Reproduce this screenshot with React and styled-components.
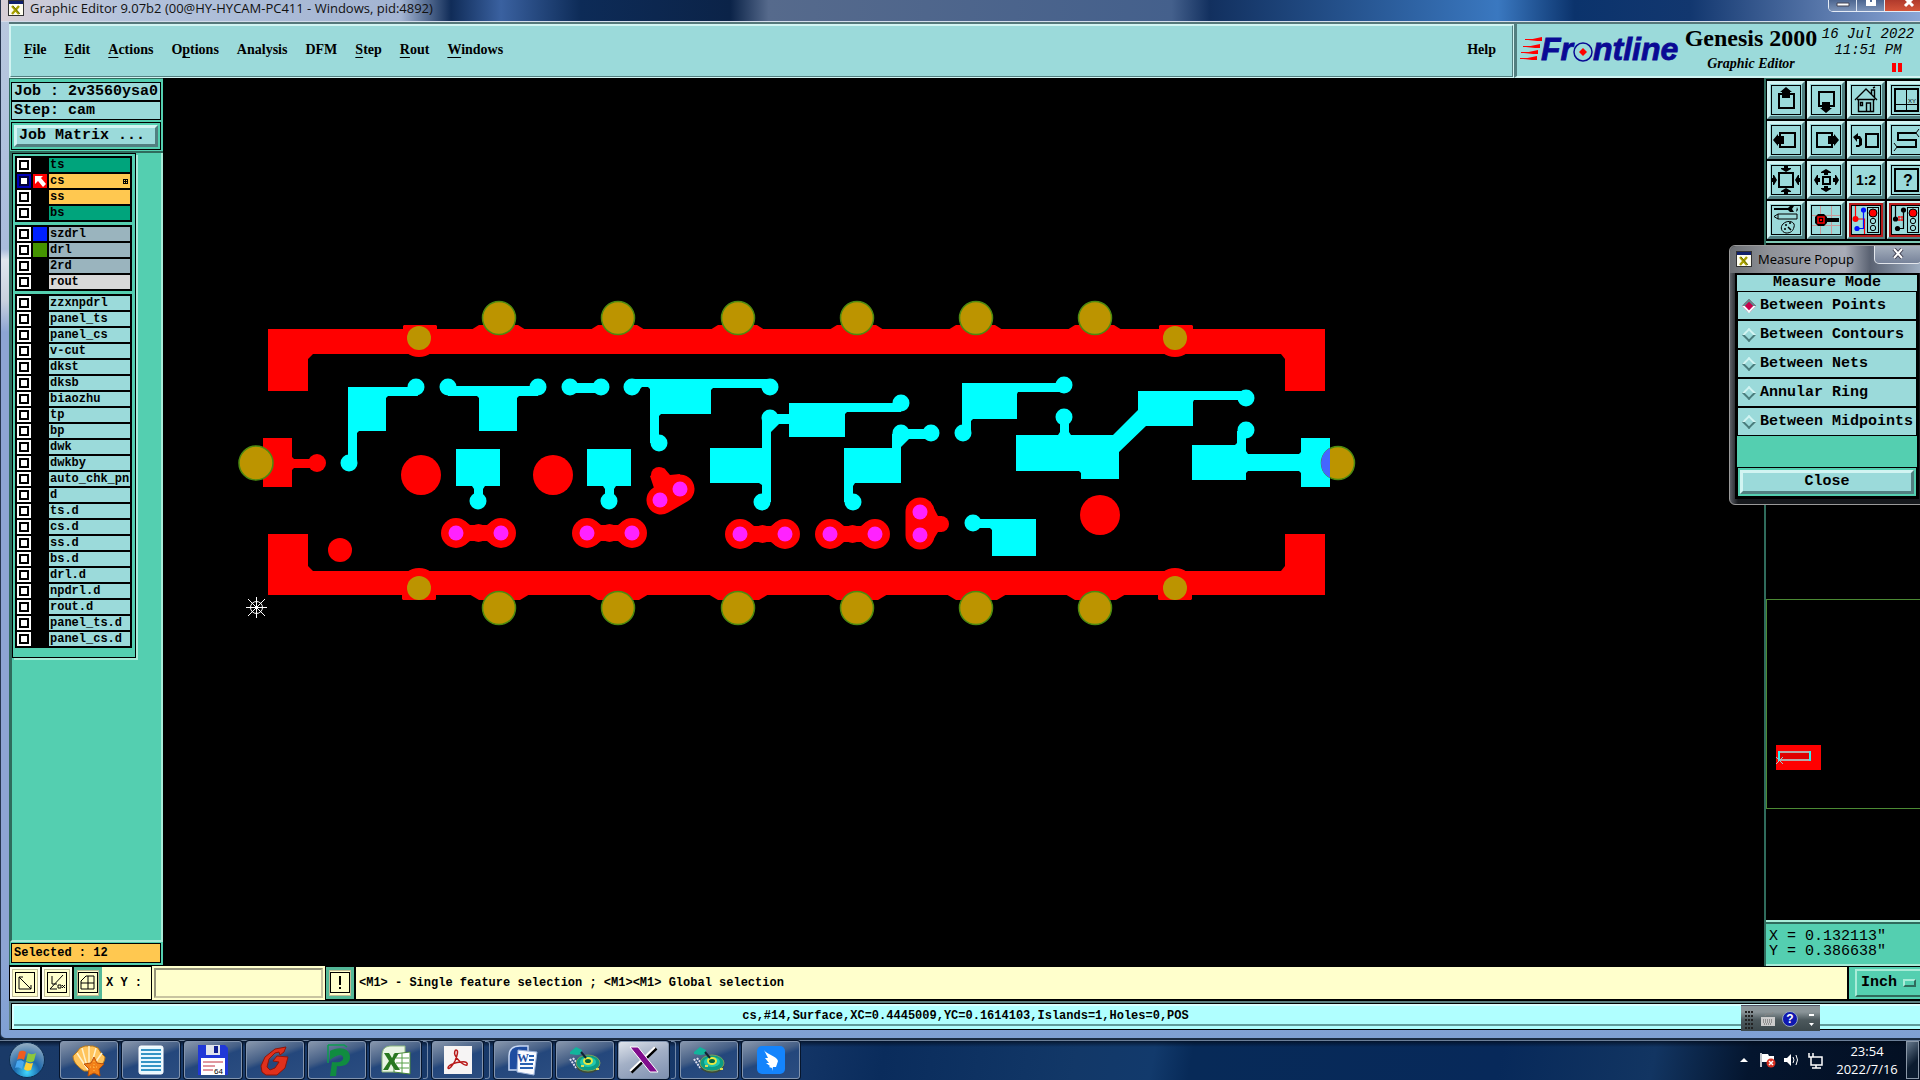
import React from "react";
import styled, { createGlobalStyle, css } from "styled-components";

const teal = "#9bdada";
const green = "#54cfb0";
const darkGreen = "#2f6b5c";
const cream = "#ffffcc";

const mono = '"Liberation Mono", monospace';
const serif = '"Liberation Serif", serif';
const sans = '"Open Sans", "Noto Sans", sans-serif';

const GlobalStyle = createGlobalStyle`
  * {
    box-sizing: border-box;
  }
  body {
    margin: 0;
    background: #000;
    overflow: hidden;
  }
  button, input, select {
    margin: 0;
    border-radius: 0;
    color: inherit;
  }
`;

const raised = css`
  border: 3px solid;
  border-color: #d2f4f2 #527f80 #527f80 #d2f4f2;
`;

const Page = styled.div`
  display: flex;
  flex-direction: column;
  height: 100vh;
  min-width: 1000px;
  overflow: hidden;
  position: relative;
  background: #061c3c;
  font-family: ${mono};
  font-weight: bold;
  color: #000;
`;

const Window = styled.div`
  flex: 1;
  min-height: 0;
  display: flex;
  flex-direction: column;
  padding: 0 0 8px 8px;
  border-left: 1px solid #26354e;
  border-bottom: 2px solid #1b2b42;
  border-radius: 0 0 0 6px;
  background: linear-gradient(#b9c9df 0%, #a9bcdc 24%, #e0e6ee 25%, #c8d0de 29%, #8da5d3 32%, #8da5d3 92%, #7fa0d4 100%);
`;

const TitleBar = styled.div`
  height: 22px;
  margin-left: -8px;
  display: flex;
  align-items: flex-start;
  justify-content: space-between;
  padding-left: 7px;
  border-bottom: 1px solid #d3dcea;
  background: linear-gradient(
    90deg,
    #d9cfd6 0,
    #b4c3dc 120px,
    #a3b4d2 400px,
    #102c58 450px,
    #3a61a0 500px,
    #0d2b57 580px,
    #0b2348 38%,
    #566a8c 40%,
    #44608c 61%,
    #12305f 63%,
    #3a78c0 78%,
    #0b336c 82%,
    #12376f 88%,
    #8ba6d6 100%
  );
`;

const Title = styled.div`
  display: flex;
  align-items: flex-start;
  gap: 6px;
  font: 13px/16px ${sans};
  color: #111;
  white-space: nowrap;
`;

const CaptionButtons = styled.div`
  display: flex;
  height: 12px;
  margin-right: -14px;
  border: 1px solid #e5ecf6;
  border-top: 0;
  border-radius: 0 0 5px 5px;
  overflow: hidden;
`;

const CaptionButton = styled.button`
  width: ${(props) => (props.$close ? 48 : 28)}px;
  padding: 0;
  border: 0;
  border-right: 1px solid #dfe7f3;
  background: ${(props) =>
    props.$close
      ? "linear-gradient(#b03a2c, #d4553a)"
      : "linear-gradient(#4d6690, #7c93b8)"};
  display: flex;
  justify-content: center;
  align-items: flex-start;
`;

const Header = styled.header`
  height: 56px;
  display: flex;
  flex-shrink: 0;
  background: ${teal};
  border-top: 2px solid #55777a;
`;

const MenuBar = styled.nav`
  flex: 1;
  display: flex;
  align-items: center;
  gap: 18px;
  padding: 0 16px 2px 13px;
  border: 2px solid;
  border-color: #d2f4f2 #527f80 #527f80 #d2f4f2;
  outline: 1px solid #d2f4f2;
  outline-offset: -1px;
`;

const MenuItem = styled.button`
  border: 0;
  padding: 0;
  background: none;
  font: bold 14px/20px ${serif};
  margin-left: ${(props) => (props.$last ? "auto" : "0")};

  u {
    text-underline-offset: 3px;
  }
`;

const Brand = styled.div`
  width: 406px;
  display: flex;
  overflow: hidden;
  padding-left: 2px;
  border-left: 3px solid #527f80;
  border-bottom: 2px solid #d2f4f2;
`;

const BrandTitle = styled.div`
  flex-shrink: 0;
  width: 134px;
  text-align: center;
  font-family: ${serif};
`;

const Product = styled.div`
  font-size: 24px;
  line-height: 29px;
  white-space: nowrap;
`;

const Module = styled.div`
  font-size: 14px;
  line-height: 22px;
  font-style: italic;
`;

const Clock = styled.div`
  flex-shrink: 0;
  width: 100px;
  padding-top: 2px;
  text-align: center;
  white-space: nowrap;
  font: italic 14px/16px ${mono};
`;

const Pause = styled.span`
  display: block;
  width: 10px;
  height: 9px;
  margin: 5px 16px 0 auto;
  border: solid #f00;
  border-width: 0 4px;
`;

const Middle = styled.main`
  flex: 1;
  min-height: 0;
  display: flex;
  background: #000;
`;

const SidePanel = styled.aside`
  width: 154px;
  flex-shrink: 0;
  display: flex;
  flex-direction: column;
  background: ${green};
  border: solid ${darkGreen};
  border-width: 1px 0 0 1px;
  margin-bottom: 2px;
`;

const JobBlock = styled.div`
  padding: 3px 2px 1px 1px;
  border-bottom: 2px solid ${darkGreen};
`;

const JobLine = styled.div`
  height: 19px;
  padding: 0 2px;
  overflow: hidden;
  white-space: nowrap;
  background: ${teal};
  border: 1px solid #000;
  font-size: 15px;
  line-height: 17px;
`;

const ButtonFrame = styled.div`
  margin-top: 2px;
  padding: 2px;
  border: 1px solid #000;
`;

const WideButton = styled.button`
  ${raised}
  display: block;
  width: 100%;
  height: ${(props) => (props.$tall ? 24 : 22)}px;
  padding: 0 2px;
  background: ${teal};
  text-align: ${(props) => props.$align || "center"};
  font: bold 15px/16px ${mono};
`;

const LayerArea = styled.div`
  flex: 1;
  min-height: 0;
  border: solid;
  border-width: 0 2px 2px 2px;
  border-color: #a8ecd8 #a8ecd8 #a8ecd8 ${darkGreen};
`;

const LayerList = styled.div`
  width: 124px;
  display: flex;
  flex-direction: column;
  gap: 3px;
  padding: 2px 2px 9px 2px;
  border: 1px solid #000;
  box-shadow: 2px 2px 0 #a8ecd8;
`;

const LayerGroup = styled.div`
  display: flex;
  flex-direction: column;
  gap: 2px;
  padding: 2px;
  width: 117px;
  background: #000;
`;

const LayerRow = styled.label`
  display: grid;
  grid-template-columns: 14px 14px 1fr;
  gap: 2px;
  height: 14px;
`;

const LayerCheck = styled.input`
  appearance: none;
  width: 14px;
  height: 14px;
  background: #fff;
  border: 2px solid ${(props) => (props.checked ? "#0000b8" : "#fff")};
  box-shadow: inset 0 0 0 ${(props) => (props.checked ? "2px #00003c" : "2px #000")};
`;

const Swatch = styled.span`
  background: ${(props) => props.$color || "#000"};
  line-height: 0;
`;

const LayerName = styled.span`
  display: flex;
  justify-content: space-between;
  align-items: center;
  padding: 0 2px 0 1px;
  overflow: hidden;
  white-space: nowrap;
  background: ${(props) => props.$color};
  font-size: 12px;
  line-height: 14px;
`;

const Selected = styled.div`
  margin: 1px 2px 2px 1px;
  height: 20px;
  padding: 0 2px;
  background: #ffc850;
  border: 1px solid #000;
  font-size: 12px;
  line-height: 18px;
`;

const Canvas = styled.div`
  flex: 1;
  min-width: 0;

  svg {
    display: block;
    width: 100%;
    height: 100%;
  }
`;

const ToolPanel = styled.aside`
  width: 156px;
  flex-shrink: 0;
  display: flex;
  flex-direction: column;
  overflow: hidden;
  border-left: 2px solid ${darkGreen};
  margin-bottom: 1px;
`;

const ToolGrid = styled.div`
  display: grid;
  grid-template-columns: repeat(4, 38px);
  gap: 2px;
  padding: 2px 1px;
  border-top: 1px solid ${darkGreen};
  border-bottom: 2px solid #7fc9b4;
`;

const ToolButton = styled.button`
  ${raised}
  border-width: ${(props) => (props.$active ? 2 : 3)}px;
  width: 38px;
  height: 38px;
  padding: 0;
  display: flex;
  align-items: center;
  justify-content: center;
  background: ${teal};
  box-shadow: ${(props) => (props.$active ? "inset 0 0 0 3px #b81c1c" : "none")};
`;

const Overview = styled.div`
  flex: 1;
  display: flex;
  align-items: flex-end;
  padding-bottom: 111px;
`;

const OverviewFrame = styled.div`
  width: 100%;
  height: 210px;
  border: 1px solid #4c8a34;
  border-right: 0;
`;

const Coordinates = styled.div`
  height: 46px;
  padding: 7px 3px 0;
  background: ${green};
  border-top: 2px solid #a8ecd8;
  border-bottom: 2px solid #a8ecd8;
  box-shadow: inset 0 2px 0 ${darkGreen};
  font-size: 15px;
  line-height: 15px;
  font-weight: normal;
  white-space: pre;
`;

const CommandBar = styled.form`
  height: 34px;
  flex-shrink: 0;
  display: flex;
  gap: 2px;
  background: #000;
  padding: 0 0 2px 1px;
  font-size: 12px;
`;

const CommandButton = styled.button`
  width: ${(props) => (props.$framed ? 28 : 30)}px;
  padding: 0;
  display: flex;
  align-items: center;
  justify-content: center;
  background: ${cream};
  border: ${(props) => (props.$framed ? "3px solid #54b898" : "2px solid #fffff0")};
  box-shadow: inset 0 0 0 1px #c0bc98;
`;

const CommandLabel = styled.label`
  flex-shrink: 0;
  width: 49px;
  padding-left: 4px;
  margin-left: -2px;
  background: ${cream};
  line-height: 33px;
  white-space: nowrap;
`;

const CommandInput = styled.input`
  width: 171px;
  padding: 0 4px;
  background: ${cream};
  border: 3px solid;
  border-color: #96947a #c8c4a0 #c8c4a0 #96947a;
  outline: 2px solid ${cream};
  outline-offset: -1px;
  font: bold 12px ${mono};
`;

const Message = styled.output`
  flex: 1;
  min-width: 0;
  overflow: hidden;
  padding-left: 3px;
  background: ${cream};
  line-height: 33px;
  white-space: nowrap;
`;

const UnitBox = styled.div`
  width: 71px;
  flex-shrink: 0;
  overflow: hidden;
  padding: 2px 0 2px 6px;
  background: ${green};
`;

const UnitButton = styled.div`
  display: flex;
  align-items: center;
  width: 76px;
  height: 28px;
  border: 2px solid;
  border-color: #a8ecd8 ${darkGreen} ${darkGreen} #a8ecd8;
`;

const UnitSelect = styled.select`
  appearance: none;
  width: 46px;
  padding: 0 0 0 4px;
  border: 0;
  background: none;
  font: bold 15px/20px ${mono};
`;

const UnitMark = styled.span`
  width: 13px;
  height: 8px;
  border: 2px solid;
  border-color: #a8ecd8 ${darkGreen} ${darkGreen} #a8ecd8;
`;

const StatusBar = styled.footer`
  height: 29px;
  flex-shrink: 0;
  border: 2px solid #5c7f80;
  border-bottom: 1px solid #000;
  border-right: 0;
  background: #b0ffff;
  box-shadow: inset 1px 1px 0 #000, inset 3px 3px 0 #d8ffff, inset 0 -3px 0 #b0ffff, inset 0 -5px 0 #5f9c9c;
  text-align: center;
  font-size: 12px;
  line-height: 27px;
`;

const Popup = styled.section`
  position: absolute;
  top: 245px;
  right: -6px;
  width: 197px;
  padding: 0 6px 5px 5px;
  border: 1px solid #9a9a9a;
  border-radius: 6px;
  background: linear-gradient(90deg, #5c5f66, #15181c 8px, #15181c);
`;

const PopupTitle = styled.header`
  display: flex;
  align-items: center;
  gap: 6px;
  height: 27px;
  margin: 0 -6px 0 -5px;
  padding: 0 0 2px 6px;
  border-radius: 6px 6px 0 0;
  background: linear-gradient(90deg, #6c6f74, #8f9298 40px, #a9adb8 115px, #5a6272 140px, #a4b4c8);
  font: 13px/18px ${sans};
`;

const PopupClose = styled.button`
  width: 48px;
  height: 18px;
  margin-left: auto;
  margin-right: 3px;
  align-self: flex-start;
  padding: 0;
  border: 1px solid #e2e6ec;
  border-top: 0;
  border-radius: 0 0 5px 5px;
  background: linear-gradient(#a5afbd, #77839a);
`;

const PopupBody = styled.fieldset`
  margin: 0;
  padding: 1px;
  min-width: 0;
  border: 1px solid #000;
  background: #000;
`;

const PopupHeading = styled.legend`
  float: left;
  width: 100%;
  padding: 0;
  height: 16px;
  background: ${teal};
  text-align: center;
  font-size: 15px;
  line-height: 16px;
`;

const Choice = styled.label`
  clear: both;
  display: flex;
  align-items: center;
  gap: 6px;
  height: 29px;
  padding-left: 6px;
  border: 1px solid #000;
  background: ${teal};
  white-space: nowrap;
  font-size: 15px;
  line-height: 20px;
`;

const Diamond = styled.input`
  appearance: none;
  flex-shrink: 0;
  width: 10px;
  height: 10px;
  transform: rotate(45deg);
  border: 2px solid;
  border-color: ${(props) =>
    props.checked
      ? "#5c8c8c #f2ffff #f2ffff #5c8c8c"
      : "#d2f4f2 #4a7c7c #4a7c7c #d2f4f2"};
  background: ${(props) => (props.checked ? "#c8004c" : teal)};
`;

const PopupFooter = styled.div`
  padding-top: 31px;
  background: ${green};
`;

const PopupButtonFrame = styled.div`
  padding: 2px;
  border: 1px solid #000;
`;

const LanguageBar = styled.div`
  position: absolute;
  right: 100px;
  bottom: 49px;
  width: 79px;
  height: 26px;
  display: flex;
  align-items: center;
  border-top: 1px solid #556;
  background: linear-gradient(#8a9498, #8a9498 6px, #4c585c 14px, #3c484c);
`;

const TaskBar = styled.footer`
  height: 40px;
  flex-shrink: 0;
  display: flex;
  align-items: flex-start;
  gap: 4px;
  padding-right: 1px;
  border-top: 1px solid #6c7f98;
  background: linear-gradient(rgba(0, 10, 25, 0.7), rgba(0, 10, 25, 0) 6px),
    linear-gradient(100deg, #1a3a68, #16386a 40%, #0a2c5c 46%, #123868 56%, #123a6c 60%, #072a58 62%, #07295a 78%, #123562 86%, #04152e 91%, #030f22);
`;

const StartButton = styled.button`
  width: 56px;
  height: 38px;
  padding: 0 0 0 8px;
  border: 0;
  background: none;
  line-height: 0;
  text-align: left;
`;

const TaskStack = styled.div`
  width: 58px;
  height: 38px;
  display: flex;
  gap: 2px;

  i {
    width: 5px;
    border: solid #7288a8;
    border-width: 1px 1px 1px 0;
    border-radius: 0 3px 3px 0;
  }
`;

const TaskButton = styled.button`
  flex: 1;
  padding: 0;
  display: flex;
  align-items: center;
  justify-content: center;
  border: 1px solid #8294ae;
  border-radius: 3px;
  box-shadow: 0 0 0 1px #06152c;
  background: ${(props) =>
    props.$active
      ? "linear-gradient(160deg, #dfe4ec, #a3b0c6 45%, #7e90b0)"
      : "linear-gradient(160deg, #8796ac, #455f86 40%, #24477c 50%, #2b4d80)"};
`;

const Tray = styled.div`
  display: flex;
  align-items: center;
  margin-left: auto;
`;

const TrayTime = styled.time`
  width: 78px;
  text-align: center;
  color: #fff;
  font: 13px/18px ${sans};
`;

const ShowDesktop = styled.button`
  width: 13px;
  height: 38px;
  padding: 0;
  border: 1px solid #8b98a8;
  background: linear-gradient(135deg, #66788c, #0c1c30 60%);
`;

const menus = [
  ["", "F", "ile"],
  ["", "E", "dit"],
  ["", "A", "ctions"],
  ["O", "p", "tions"],
  ["Analysis", "", ""],
  ["DFM", "", ""],
  ["", "S", "tep"],
  ["", "R", "out"],
  ["", "W", "indows"],
];

const layerGroups = [
  [
    { name: "ts", color: "#00a47c" },
    { name: "cs", color: "#ffc850", swatch: "#f00", work: true },
    { name: "ss", color: "#ffc850" },
    { name: "bs", color: "#00a47c" },
  ],
  [
    { name: "szdrl", color: "#9ab4be", swatch: "#0020ff" },
    { name: "drl", color: "#9ab4be", swatch: "#449400" },
    { name: "2rd", color: "#9ab4be" },
    { name: "rout", color: "#d8d8d8" },
  ],
  [
    "zzxnpdrl", "panel_ts", "panel_cs", "v-cut", "dkst", "dksb", "biaozhu",
    "tp", "bp", "dwk", "dwkby", "auto_chk_pnl", "d", "ts.d", "cs.d", "ss.d",
    "bs.d", "drl.d", "npdrl.d", "rout.d", "panel_ts.d", "panel_cs.d",
  ].map((name) => ({ name, color: teal })),
];

const measureModes = [
  "Between Points",
  "Between Contours",
  "Between Nets",
  "Annular Ring",
  "Between Midpoints",
];

const XIcon = () => (
  <svg width="16" height="16" viewBox="0 0 16 16">
    <rect x="0.5" y="0.5" width="15" height="15" fill="#fffef0" stroke="#333" />
    <rect x="1" y="1" width="14" height="3" fill="#10206c" />
    <path d="M4 6l7 8M11 6l-7 8" stroke="#a8a000" strokeWidth="2.4" />
    <path d="M5 6l7 8" stroke="#4c5c00" strokeWidth="0.8" />
  </svg>
);

const LogoArt = styled.svg`
  flex-shrink: 0;
  margin-right: 1px;
`;

const Logo = () => (
  <LogoArt width="164" height="52" viewBox="0 0 164 52">
    <g stroke="#f00" strokeWidth="1">
      <path d="M6 15.5h14M4 22.5h14M2 28.5h14M1 34.5h15" />
    </g>
    <g fill="#f00">
      <path d="M9 16l14-3v4h-5zM7 23l14-3v4h-5zM5 29l14-3v4h-5zM4 35l14-3v4h-5z" />
    </g>
    <g
      fontFamily="Liberation Sans, sans-serif"
      fontStyle="italic"
      fontWeight="bold"
      fontSize="32"
      fill="#0a0a94"
      stroke="#0a0a94"
      strokeWidth="0.8"
    >
      <text x="22" y="36">Fr</text>
      <text x="74" y="36">ntline</text>
    </g>
    <circle cx="64" cy="28" r="9" fill={teal} stroke="#0a0a94" strokeWidth="1.500" />
    <path d="M64 24l4 4-4 4-4-4z" fill="#f00" />
  </LogoArt>
);

const wedge = "M0-3l5 3v1h-3v2h-4V1h-3V0z";

const tools = [
  {
    label: "Pan up",
    art: (
      <>
        <rect x="8" y="9" width="15" height="14" fill="none" stroke="#000" strokeWidth="2" />
        <path d="M15 2l6 5h-2v6h-8V7H9z" />
      </>
    ),
  },
  {
    label: "Pan down",
    art: (
      <>
        <rect x="8" y="7" width="15" height="14" fill="none" stroke="#000" strokeWidth="2" />
        <path d="M15 28l6-5h-2v-6h-8v6H9z" />
      </>
    ),
  },
  {
    label: "Home",
    art: (
      <path
        d="M4 15L15 4l11 11M6 14.500h18M7.500 15v11.500h15V15M15.500 26v-8h4v8M9.500 17.500h2v3h-2zM20.500 9V5h3v7M22 3l2-1"
        fill="none"
        stroke="#000"
        strokeWidth="1.400"
      />
    ),
  },
  {
    label: "Zoom XY",
    art: (
      <>
        <rect x="4" y="4" width="23" height="22" fill="none" stroke="#000" strokeWidth="2" />
        <path d="M15.500 4v22M4 19.500h23" stroke="#000" />
        <text x="17" y="18" fontSize="6" fontFamily="Liberation Sans, sans-serif">XY</text>
      </>
    ),
  },
  {
    label: "Pan left",
    art: (
      <>
        <rect x="9" y="8" width="15" height="14" fill="none" stroke="#000" strokeWidth="2" />
        <path d="M2 15l5-6v2h6v8H7v2z" />
      </>
    ),
  },
  {
    label: "Pan right",
    art: (
      <>
        <rect x="6" y="8" width="15" height="14" fill="none" stroke="#000" strokeWidth="2" />
        <path d="M28 15l-5-6v2h-6v8h6v2z" />
      </>
    ),
  },
  {
    label: "Previous view",
    art: (
      <>
        <rect x="15" y="9" width="12" height="13" fill="none" stroke="#000" strokeWidth="2" />
        <path d="M2 12l5-4v3h2l2 3v6l-3 2H5v-2h3v-6H6v3z" />
      </>
    ),
  },
  {
    label: "Path",
    art: (
      <>
        <path d="M6 22h19v-7H7V8h18" fill="none" stroke="#000" strokeWidth="2" />
        <path d="M3 18l3 4-3 4M28 4l-3 4 3 4" fill="none" stroke="#000" />
      </>
    ),
  },
  {
    label: "Zoom in",
    art: (
      <>
        <rect x="8" y="8" width="14" height="14" fill="none" stroke="#000" strokeWidth="2" />
        <path d={wedge} transform="translate(15 4) rotate(180)" />
        <path d={wedge} transform="translate(15 26)" />
        <path d={wedge} transform="translate(3 15) rotate(90)" />
        <path d={wedge} transform="translate(27 15) rotate(-90)" />
      </>
    ),
  },
  {
    label: "Zoom out",
    art: (
      <>
        <rect x="12" y="12" width="7" height="7" fill="none" stroke="#000" strokeWidth="2" />
        <path d={wedge} transform="translate(15 7)" />
        <path d={wedge} transform="translate(15 24) rotate(180)" />
        <path d={wedge} transform="translate(6 15) rotate(-90)" />
        <path d={wedge} transform="translate(25 15) rotate(90)" />
      </>
    ),
  },
  {
    label: "Scale",
    art: (
      <text x="15" y="20" textAnchor="middle" fontSize="14" fontWeight="bold" fontFamily="Liberation Sans, sans-serif">
        1:2
      </text>
    ),
  },
  {
    label: "Query",
    art: (
      <>
        <rect x="4" y="4" width="23" height="22" fill="none" stroke="#000" strokeWidth="2" />
        <text x="17" y="21" textAnchor="middle" fontSize="16" fontWeight="bold" fontFamily="Liberation Sans, sans-serif">
          ?
        </text>
      </>
    ),
  },
  {
    label: "Setup",
    art: (
      <>
        <path d="M3 3h14l2-2h4l-2 3 2 3h-4l-2-2H3zM26 2l1 3-2 2z" />
        <path d="M3 11.500l4-2.500h19v5H7zM7 9v5" fill="none" stroke="#000" />
        <path d="M12 19c5-5 13-2 11 3-1 4-3 6-8 6-5-1-6-6-3-9z" fill="none" stroke="#000" />
        <path d="M14 20h2M18 18h2M13 24h2M17 22l3 3" stroke="#000" strokeWidth="1.500" />
      </>
    ),
  },
  {
    label: "Snap",
    art: (
      <>
        <path d="M1 10.500h28M1 20.500h28M9.500 1v28M20.500 1v28" stroke="#c99a9a" />
        <path d="M15 13h13v4H15z" />
        <path d="M7 9h6l3 3v6l-3 3H7l-3-3v-6z" />
        <rect x="7" y="12" width="6" height="6" fill="none" stroke="#f00" strokeWidth="1.500" />
        <rect x="9" y="14" width="2" height="2" fill="#f00" />
      </>
    ),
  },
  {
    label: "Net check",
    active: true,
    art: (
      <>
        <path d="M4.500 1v13h9v15" fill="none" stroke="#f00" strokeWidth="1.200" />
        <path d="M12.500 4v19.500H6" fill="none" stroke="#0010ff" strokeWidth="1.200" />
        <circle cx="4.500" cy="14" r="3" fill="#f00" />
        <circle cx="12.500" cy="5" r="2.600" fill="#0010ff" />
        <circle cx="6" cy="23.500" r="2.600" fill="#0010ff" />
        <TrafficLight />
      </>
    ),
  },
  {
    label: "Spacing check",
    active: true,
    art: (
      <>
        <path d="M4.500 1v13M12.500 5v18.500H6" fill="none" stroke="#000" strokeWidth="1.200" />
        <path d="M7 12h5M7 15h5M8 11v5M11 11v5" stroke="#f00" />
        <circle cx="4.500" cy="14" r="2.600" />
        <circle cx="12.500" cy="5" r="2.600" />
        <circle cx="6.500" cy="23.500" r="2.600" />
        <TrafficLight />
      </>
    ),
  },
];

function TrafficLight() {
  return (
    <g stroke="#000">
      <rect x="16.500" y="2.500" width="11" height="25" fill="none" />
      <circle cx="22" cy="8" r="4" fill="#f00" />
      <circle cx="22" cy="16" r="2.700" fill={teal} />
      <circle cx="22" cy="23" r="2.700" fill={teal} />
    </g>
  );
}

const bigPads = [498, 617, 737, 856, 975, 1094];
const smallPads = [419, 1175];
const dumbbells = [
  [456, 501, 533],
  [587, 632, 533],
  [740, 785, 534],
  [830, 875, 534],
];
const cyanDots = [
  [416, 387], [349, 463], [448, 387], [538, 387], [570, 387], [601, 387],
  [632, 387], [770, 387], [659, 443], [770, 418], [901, 403], [762, 502],
  [853, 502], [901, 433], [931, 433], [1064, 385], [963, 433], [1064, 417],
  [1246, 398], [1246, 430], [973, 523], [478, 501], [609, 501],
];

const Board = () => (
  <svg viewBox="163 78 1601 889" preserveAspectRatio="xMinYMin meet" role="img" aria-label="cs layer">
    <g fill="#f00">
      <path d="M268 329h1057v62h-40v-32l-4-5H313l-5 5v32h-40z" />
      <path d="M268 534h40v32l5 5h968l4-5v-32h40v61H268z" />
      {smallPads.map((x) => (
        <g key={x}>
          <path d={`M${x - 16} 332v-6l1-1h32l1 1v6z`} />
          <path d={`M${x - 12} 353q5 4 12 4t12-4zM${x - 12} 572q5-4 12-4t12 4z`} />
          <path d={`M${x - 17} 590v9l1 1h32l1-1v-9z`} />
        </g>
      ))}
      {bigPads.map((x) => (
        <g key={x}>
          <path d={`M${x - 27} 330l8-5h39l8 5z`} />
          <path d={`M${x - 29} 594l10 6h41l10-6z`} />
        </g>
      ))}
      <path d="M263 438h29v49h-29zM292 457l2 2h20v9h-20l-2 2z" />
      <circle cx="317" cy="463" r="9" />
      <circle cx="421" cy="475" r="20" />
      <circle cx="553" cy="475" r="20" />
      <circle cx="1100" cy="515" r="20" />
      <circle cx="340" cy="550" r="12" />
      {dumbbells.map(([a, b, y]) => (
        <g key={a}>
          <circle cx={a} cy={y} r="15" />
          <circle cx={b} cy={y} r="15" />
          <path d={`M${a + 9} ${y - 12}l5 4h17l5-4v24l-5-4h-17l-5 4z`} />
          <circle cx={(a + b) / 2} cy={y} r="9" />
        </g>
      ))}
      <path d="M680 489L661 500" stroke="#f00" strokeWidth="29" strokeLinecap="round" />
      <path d="M650 476l5 15-5 9h25l5-26-10 1-6-7z" />
      <circle cx="659" cy="475" r="8" />
      <path d="M920 512v23" stroke="#f00" strokeWidth="29" strokeLinecap="round" />
      <path d="M930 501l8 15h4v16h-4l-8 13z" />
      <circle cx="941" cy="524" r="8" />
    </g>
    <g fill="#f2f">
      {dumbbells.map(([a, b, y]) => (
        <g key={a}>
          <circle cx={a} cy={y} r="7.500" />
          <circle cx={b} cy={y} r="7.500" />
        </g>
      ))}
      <circle cx="680" cy="489" r="7.500" />
      <circle cx="660" cy="500" r="7.500" />
      <circle cx="920" cy="512" r="7.500" />
      <circle cx="920" cy="535" r="7.500" />
    </g>
    <g fill="#0ff">
      {cyanDots.map(([x, y]) => (
        <circle key={`${x}-${y}`} cx={x} cy={y} r="8.500" />
      ))}
      <path d="M348 387h60l6-6 4 15h-30l-2 2v33h-27l-2 2v30h-9z" />
      <path d="M448 380l8 6h74l8-6v16h-19l-2 2v33h-38v-33l-2-2h-29z" />
      <path d="M570 383h31v10h-31z" />
      <path d="M632 379h138v9l-7 1-2-1h-48l-2 2v24h-50l-2 2v20l7 7h-16v-54l-2-2h-6l-8 8z" />
      <path d="M762 419h9v-5h18v-11h104l8-7v16h-54l-2 2v23h-56v-13h-10l-8 8v70h-9v-17l-3-2h-49v-35h52z" />
      <path d="M844 448h48v-14l9-5h30v10h-22l-8 8v36h-46l-2 3v16h-9z" />
      <path d="M962 383h94l8-6v15h-46l-1 2v25h-44l-2 2v13h-9z" />
      <path d="M1060 418h9v14l2 3h42l25-25v-19h108v9h-52l-1 2v24h-47l-27 26v27h-38v-6l-2-2h-63v-36h42l2-3z" />
      <path d="M1237 431h9v20l2 3h51l2-2v-14h29v49h-29v-14l-2-2h-51l-2 2v7h-54v-35h43l2-2z" />
      <path d="M973 519h63v37h-44v-26l-2-2h-17z" />
      <path d="M456 449h44v37h-15l-2 3v11h-9v-11l-2-3h-16z" />
      <path d="M587 449h44v37h-15l-2 3v11h-9v-11l-2-3h-16z" />
    </g>
    <g fill="#bc9400" stroke="#4c8a10" strokeWidth="1.500">
      {bigPads.map((x) => (
        <g key={x}>
          <circle cx={x + 1} cy="318" r="16.500" />
          <circle cx={x + 1} cy="608" r="16.500" />
        </g>
      ))}
      <circle cx="256" cy="463" r="17" />
      <circle cx="1338" cy="463" r="16.500" />
    </g>
    <path d="M1330 448q-9 5-9 15t9 15z" fill="#46f" />
    <g fill="#bc9400">
      {smallPads.map((x) => (
        <g key={x}>
          <circle cx={x} cy="338" r="12" />
          <circle cx={x} cy="588" r="12" />
        </g>
      ))}
    </g>
    <g stroke="#fff" fill="none">
      <circle cx="256.500" cy="607.500" r="6" />
      <path d="M246 607.500h21M256.500 597v21M248 599l17 17M265 599l-17 17" />
    </g>
  </svg>
);

const OverviewMap = () => (
  <svg width="60" height="200" viewBox="0 0 60 200">
    <path d="M9 145h45v25H9z" fill="#f00" />
    <path d="M12 152h31v8H12z" fill="#e00000" stroke="#b8a8a8" strokeWidth="2" />
    <path d="M12 151v10M43 151v10" stroke="#3ee" strokeWidth="2" />
    <path d="M9 157l7 7M16 157l-7 7" stroke="#9cc" />
  </svg>
);

const Disc = () => (
  <svg width="34" height="32" viewBox="0 0 34 32">
    <path d="M2 15l7 10M5 14l7 9" stroke="#dde" strokeWidth="2" strokeDasharray="2 1" />
    <ellipse cx="20" cy="21" rx="12" ry="8" fill="#3c4c38" />
    <ellipse cx="20" cy="19" rx="12" ry="8" fill="#0c9c84" stroke="#7c9c58" />
    <ellipse cx="20" cy="18" rx="8" ry="5" fill="#22c8b0" />
    <ellipse cx="20" cy="17" rx="4" ry="3" fill="#064" stroke="#e8e840" strokeWidth="2" />
    <path d="M2 8l6-5 6 3v4l-5 1-7-1z" fill="#12b49c" />
    <path d="M13 8l5 6" stroke="#123" strokeWidth="2" />
    <path d="M28 24h3v2h-3zM13 21h3v2h-3z" fill="#dd5" />
  </svg>
);

const taskIcons = {
  Shell: (
    <svg width="34" height="34" viewBox="0 0 34 34">
      <path d="M12 28C6 24 1 19 1 13l4-4 3-4 5-2h8l5 2 3 5 4 4c0 6-5 10-11 14z" fill="#ffc45c" stroke="#b87818" />
      <path d="M16 27L5 10M16 27L10 5M17 27V3M18 27l6-22M18 27L30 10" stroke="#fff0c8" strokeWidth="1.500" />
      <path d="M22 14l3 6 7 1-5 5 1 7-6-3-6 3 1-7-5-5 7-1z" fill="#f28018" stroke="#b85008" />
      <path d="M22 18v10M18 24h9" stroke="#ffc050" strokeDasharray="1 2" />
    </svg>
  ),
  Notes: (
    <svg width="26" height="30" viewBox="0 0 26 30">
      <rect x="1" y="1" width="24" height="28" rx="2" fill="#e8f8ff" stroke="#fff" />
      <path d="M3 5h20M3 9h20M3 13h20M3 17h20M3 21h20M3 25h20" stroke="#3494c4" strokeWidth="2" />
    </svg>
  ),
  Save: (
    <svg width="32" height="32" viewBox="0 0 32 32">
      <path d="M1 1h27l3 3v27H1z" fill="#2038d8" />
      <path d="M9 1h14v10H9z" fill="#e0e4ec" />
      <path d="M17 2h4v7h-4z" fill="#102090" />
      <path d="M4 14h24v17H4z" fill="#fff" />
      <path d="M6 18h20M6 22h12M6 26h10" stroke="#c03040" />
      <text x="17" y="30" fontSize="8" fontFamily="Liberation Sans, sans-serif">64</text>
    </svg>
  ),
  Editor: (
    <svg width="32" height="32" viewBox="0 0 32 32">
      <path d="M27 3L16 5 6 13 2 22l1 6 4 3h11l8-7 3-11-11-1-4 5 6 1-4 6-5 2-3-3 2-8 6-6 4-1 1 3 4-3z" fill="#e0301c" stroke="#901408" />
    </svg>
  ),
  Pads: (
    <svg width="34" height="34" viewBox="0 0 34 34">
      <path d="M8 2h16l3 2M8 2v18" fill="none" stroke="#0c9c50" strokeWidth="1.500" />
      <path d="M10 8c9-5 20-3 20 6 0 7-6 10-13 9l-1 10h-6l2-14c8 1 12-1 11-5-2-4-8-1-13 3z" fill="#108c40" />
    </svg>
  ),
  Excel: (
    <svg width="32" height="32" viewBox="0 0 32 32">
      <path d="M2 28V12C2 4 6 2 12 2h13v26z" fill="#e8f4e4" stroke="#8cb880" />
      <path d="M14 10l16-2v22l-16-2z" fill="#fff" stroke="#488838" />
      <path d="M16 14h13M16 19h13M16 24h13M22 9v20" stroke="#58a048" />
      <path d="M4 9h5l3 5 3-5h4l-5 8 6 9h-5l-4-6-3 6H3l6-9z" fill="#287820" />
    </svg>
  ),
  Reader: (
    <svg width="28" height="28" viewBox="0 0 28 28">
      <path d="M0 0h28v28H0z" fill="#f6f4f4" />
      <path d="M12 4c3 0 1 6-1 11-2 4-6 9-7 7 0-3 8-6 13-6 5-1 7 1 6 3-3 1-10-5-12-10-1-2 0-5 1-5z" fill="none" stroke="#b81818" strokeWidth="1.500" />
    </svg>
  ),
  Word: (
    <svg width="32" height="32" viewBox="0 0 32 32">
      <path d="M2 26V12C2 5 6 2 13 2h8v24z" fill="#1e4ca0" stroke="#c8d8f4" strokeWidth="1.500" />
      <path d="M11 6l19 2-3 23-17-3z" fill="#f8faff" stroke="#98b0d8" />
      <path d="M22 12h5M22 16h5M13 20h13M13 24h13" stroke="#2860b0" strokeWidth="2" />
      <text x="10" y="18" fontSize="12" fontWeight="bold" fontFamily="Liberation Serif, serif" fill="#1e4ca0">W</text>
    </svg>
  ),
  Measure: <Disc />,
  Genesis: (
    <svg width="34" height="30" viewBox="0 0 34 30">
      <path d="M29 3L4 27" stroke="#000" strokeWidth="4" />
      <path d="M28 2L3 26" stroke="#fff" strokeWidth="2" />
      <path d="M3 2h8l20 25h-8z" fill="#800c8c" stroke="#fff" />
    </svg>
  ),
  Tool: <Disc />,
  Wing: (
    <svg width="28" height="28" viewBox="0 0 28 28">
      <rect width="28" height="28" rx="5" fill="#1484fc" />
      <path d="M7 4c2 4 13 6 14 11l-2 6h-3l-1 4v-3l-3-1 1-1-4-3h3l-4-5h3z" fill="#fff" />
    </svg>
  ),
};

const tasks = [
  ["Shell"], ["Notes"], ["Save"], ["Editor"], ["Pads"], ["Excel", true],
  ["Reader", true], ["Word"], ["Measure"], ["Genesis", true], ["Tool"], ["Wing"],
];

const StartOrb = () => (
  <svg width="38" height="38" viewBox="0 0 38 38">
    <defs>
      <radialGradient id="orb" cx="50%" cy="85%" r="80%">
        <stop offset="0" stopColor="#40d8ff" />
        <stop offset="0.450" stopColor="#1c68ac" />
        <stop offset="1" stopColor="#8ca8c0" />
      </radialGradient>
    </defs>
    <circle cx="19" cy="19" r="17.500" fill="url(#orb)" stroke="#0c2c50" />
    <path d="M11 11c3-2 5-1 7 0l-2 8c-2-1-4-2-7 0z" fill="#f05c20" />
    <path d="M20 12c2 1 4 2 8 0l-2 8c-3 2-6 1-8 0z" fill="#8cc83c" />
    <path d="M9 20c3-1 5-1 7 1l-2 7c-2-1-4-2-7-1z" fill="#48a8f0" />
    <path d="M18 21c2 1 4 2 7 1l-2 7c-3 1-5 1-7-1z" fill="#ffd034" />
  </svg>
);

const ToolIcon = ({ children }) => (
  <svg width="32" height="32" viewBox="-1 -1 32 32">
    <rect x="0.500" y="0.500" width="29" height="29" fill="none" stroke="#000" />
    {children}
  </svg>
);

const CommandIcon = ({ children }) => (
  <svg width="20" height="22" viewBox="0 0 20 22" fill="none" stroke="#000">
    <rect x="0.500" y="0.500" width="19" height="20" />
    {children}
  </svg>
);

const App = () => {
  const [workLayers, setWorkLayers] = React.useState(["cs"]);
  const [mode, setMode] = React.useState("Between Points");

  const toggleLayer = (name) => {
    if (workLayers.includes(name)) {
      setWorkLayers(workLayers.filter((layer) => layer !== name));
    } else {
      setWorkLayers([...workLayers, name]);
    }
  };

  return (
    <Page>
      <GlobalStyle />
      <Window>
        <TitleBar>
          <Title>
            <XIcon />
            Graphic Editor 9.07b2 (00@HY-HYCAM-PC411 - Windows, pid:4892)
          </Title>
          <CaptionButtons>
            <CaptionButton aria-label="Minimize">
              <svg width="14" height="8">
                <path d="M1 3h12v3H1z" fill="#fff" stroke="#445" />
              </svg>
            </CaptionButton>
            <CaptionButton aria-label="Restore">
              <svg width="12" height="8">
                <path d="M2 0v5h8V0M4 0v3h4V0" fill="none" stroke="#fff" strokeWidth="2" />
              </svg>
            </CaptionButton>
            <CaptionButton $close aria-label="Close window">
              <svg width="14" height="8">
                <path d="M3 -2l8 8M11 -2l-8 8" stroke="#fff" strokeWidth="3" />
              </svg>
            </CaptionButton>
          </CaptionButtons>
        </TitleBar>

        <Header>
          <MenuBar>
            {menus.map(([before, key, after]) => (
              <MenuItem key={before + key + after}>
                {before}
                {key && <u>{key}</u>}
                {after}
              </MenuItem>
            ))}
            <MenuItem $last>Help</MenuItem>
          </MenuBar>
          <Brand>
            <Logo />
            <BrandTitle>
              <Product>Genesis 2000</Product>
              <Module>Graphic Editor</Module>
            </BrandTitle>
            <Clock>
              16 Jul 2022
              <br />
              11:51 PM
              <Pause />
            </Clock>
          </Brand>
        </Header>

        <Middle>
          <SidePanel>
            <JobBlock>
              <JobLine>Job : 2v3560ysa0</JobLine>
              <JobLine>Step: cam</JobLine>
              <ButtonFrame>
                <WideButton $align="left">Job Matrix ...</WideButton>
              </ButtonFrame>
            </JobBlock>
            <LayerArea>
              <LayerList>
                {layerGroups.map((group) => (
                  <LayerGroup key={group[0].name}>
                    {group.map((layer) => (
                      <LayerRow key={layer.name}>
                        <LayerCheck
                          type="checkbox"
                          checked={workLayers.includes(layer.name)}
                          onChange={() => toggleLayer(layer.name)}
                        />
                        <Swatch $color={layer.swatch}>
                          {layer.work && (
                            <svg width="14" height="14">
                              <path d="M2 2h8L8 4l5 6-3 3-5-6-3 3z" fill="#fff" />
                            </svg>
                          )}
                        </Swatch>
                        <LayerName $color={layer.color}>
                          {layer.name}
                          {layer.work && (
                            <svg width="5" height="5">
                              <path d="M0 .5h5M0 2.500h5M0 4.500h5M.5 0v5M2.500 0v5M4.500 0v5" stroke="#000" />
                            </svg>
                          )}
                        </LayerName>
                      </LayerRow>
                    ))}
                  </LayerGroup>
                ))}
              </LayerList>
            </LayerArea>
            <Selected>Selected : 12</Selected>
          </SidePanel>

          <Canvas>
            <Board />
          </Canvas>

          <ToolPanel>
            <ToolGrid>
              {tools.map((tool) => (
                <ToolButton key={tool.label} aria-label={tool.label} $active={tool.active}>
                  <ToolIcon>{tool.art}</ToolIcon>
                </ToolButton>
              ))}
            </ToolGrid>
            <Overview>
              <OverviewFrame>
                <OverviewMap />
              </OverviewFrame>
            </Overview>
            <Coordinates>{'X = 0.132113"\nY = 0.386638"'}</Coordinates>
          </ToolPanel>
        </Middle>

        <CommandBar onSubmit={(e) => e.preventDefault()}>
          <CommandButton type="button" aria-label="Snap to line">
            <CommandIcon>
              <path d="M4 5l12 12M4 9V5h4M16 13v4h-4M4 9v8h8" />
            </CommandIcon>
          </CommandButton>
          <CommandButton type="button" aria-label="Angle">
            <CommandIcon>
              <path d="M3 17L16 3M5 4v8h5M11 13h3v3h-3zM15 13l3 3M18 13l-3 3M3 17h7" />
            </CommandIcon>
          </CommandButton>
          <CommandButton type="button" $framed aria-label="Grid">
            <CommandIcon>
              <path d="M3 17V9l5-5h8v13zM3 11h13M10 4v13" />
            </CommandIcon>
          </CommandButton>
          <CommandLabel htmlFor="xy">X Y :</CommandLabel>
          <CommandInput id="xy" />
          <CommandButton type="submit" $framed aria-label="Run">
            <CommandIcon>
              <path d="M10 4v9M10 15v2" strokeWidth="2" />
            </CommandIcon>
          </CommandButton>
          <Message>
            {"<M1> - Single feature selection ; <M1><M1> Global selection"}
          </Message>
          <UnitBox>
            <UnitButton>
              <UnitSelect aria-label="Units">
                <option>Inch</option>
                <option>MM</option>
              </UnitSelect>
              <UnitMark />
            </UnitButton>
          </UnitBox>
        </CommandBar>
        <StatusBar>
          cs,#14,Surface,XC=0.4445009,YC=0.1614103,Islands=1,Holes=0,POS
        </StatusBar>
      </Window>

      <Popup>
        <PopupTitle>
          <XIcon />
          Measure Popup
          <PopupClose aria-label="Close popup">
            <svg width="12" height="11">
              <path d="M2 1l8 9M10 1L2 10" stroke="#445" strokeWidth="4" />
              <path d="M2 1l8 9M10 1L2 10" stroke="#fff" strokeWidth="2" />
            </svg>
          </PopupClose>
        </PopupTitle>
        <PopupBody>
          <PopupHeading>Measure Mode</PopupHeading>
          {measureModes.map((name) => (
            <Choice key={name}>
              <Diamond
                type="radio"
                name="mode"
                checked={mode === name}
                onChange={() => setMode(name)}
              />
              {name}
            </Choice>
          ))}
          <PopupFooter>
            <PopupButtonFrame>
              <WideButton $tall>Close</WideButton>
            </PopupButtonFrame>
          </PopupFooter>
        </PopupBody>
      </Popup>

      <LanguageBar>
        <svg width="79" height="24" viewBox="0 0 79 24">
          <path d="M4 5h9M4 9h9M4 13h9M4 17h9M4 21h9" stroke="#222" strokeWidth="2" strokeDasharray="2 1" />
          <path d="M20 10h14v9H20z" fill="#ccc" />
          <path d="M22 13h10M22 15h10M23 17h8" stroke="#555" strokeDasharray="1 1" />
          <path d="M24 9c0-4 8 0 8-4" fill="none" stroke="#888" />
          <circle cx="49" cy="12" r="7.500" fill="#1018b0" stroke="#9ab" />
          <text x="49" y="16" textAnchor="middle" fontSize="12" fontWeight="bold" fontFamily="Liberation Sans, sans-serif" fill="#fff">?</text>
          <path d="M68 7h5v2h-5zM68 16h5l-2.500 3z" fill="#fff" />
        </svg>
      </LanguageBar>

      <TaskBar>
        <StartButton aria-label="Start">
          <StartOrb />
        </StartButton>
        {tasks.map(([name, stacked]) => (
          <TaskStack key={name}>
            <TaskButton aria-label={name} $active={name === "Genesis"}>
              {taskIcons[name]}
            </TaskButton>
            {stacked && <i />}
          </TaskStack>
        ))}
        <Tray>
          <svg width="90" height="20" viewBox="0 0 90 20">
            <path d="M2 12l4-4 4 4z" fill="#fff" />
            <path d="M23 3v14" stroke="#fff" strokeWidth="1.500" />
            <path d="M24 4h6l1 2h5v6H24z" fill="#fff" />
            <circle cx="33" cy="13" r="4.500" fill="#d83020" />
            <path d="M31 11l4 4M35 11l-4 4" stroke="#fff" strokeWidth="1.500" />
            <path d="M46 8h3l4-4v12l-4-4h-3z" fill="#fff" />
            <path d="M55 7q2 3 0 6M58 5q3 5 0 10" fill="none" stroke="#fff" />
            <path d="M75 7h9v8H73v-5M78 15v3M74 18h9M71 3v4h4V3M73 7v4" fill="none" stroke="#fff" strokeWidth="1.500" />
          </svg>
          <TrayTime>
            23:54
            <br />
            2022/7/16
          </TrayTime>
          <ShowDesktop aria-label="Show desktop" />
        </Tray>
      </TaskBar>
    </Page>
  );
};

export default App;
